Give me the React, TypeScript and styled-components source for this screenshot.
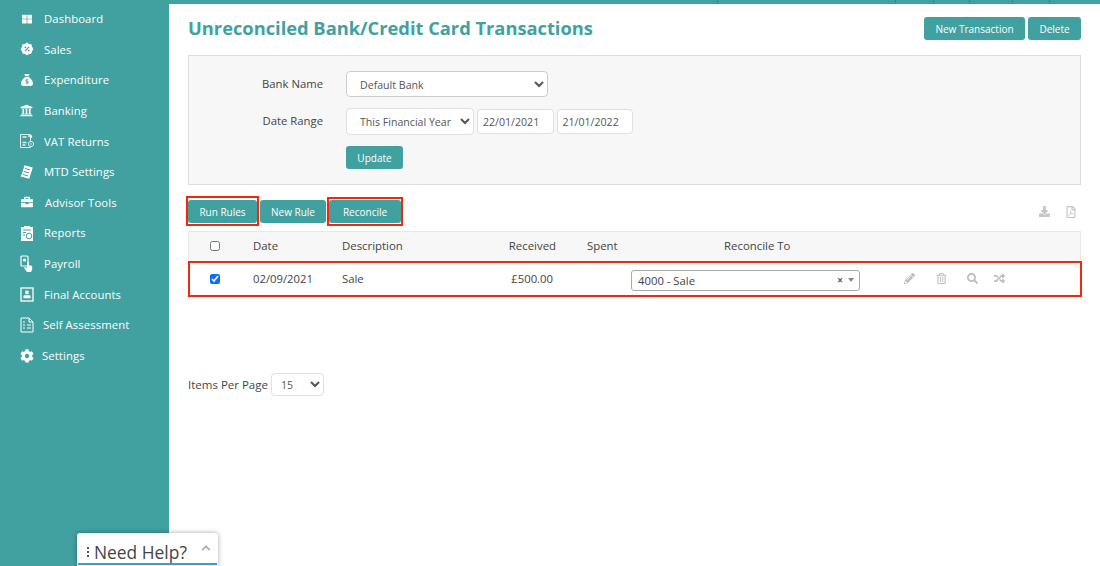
import styled, { createGlobalStyle } from "styled-components";
import {
  FaBriefcase,
  FaChevronUp,
  FaCog,
  FaDownload,
  FaPencilAlt,
  FaRandom,
  FaRegFilePdf,
  FaSearch,
  FaThLarge,
  FaUniversity,
  FaRegTrashAlt,
} from "react-icons/fa";
import { FaSackDollar } from "react-icons/fa6";
import { RiDiscountPercentFill } from "react-icons/ri";
import type { ReactNode } from "react";

const teal = "#41a1a0";
const red = "#f0280f";

const GlobalStyle = createGlobalStyle`
  html, body {
    margin: 0;
    padding: 0;
    height: 100%;
    overflow: hidden;
    background: #fff;
  }
  body {
    font-family: "Open Sans", "Liberation Sans", sans-serif;
    font-size: 11px;
    color: #444;
  }
`;

const Page = styled.div`
  display: flex;
  width: 1100px;
  height: 566px;
  position: relative;
  overflow: hidden;
`;

const Sidebar = styled.nav`
  width: 169px;
  flex: none;
  background: ${teal};
  padding-top: 3.4px;
  box-sizing: border-box;
`;

const NavItem = styled.div<{ $height?: number; $left?: number }>`
  display: flex;
  align-items: center;
  height: ${(p) => p.$height ?? 30.6}px;
  padding-left: ${(p) => p.$left ?? 44}px;
  position: relative;
  color: #fff;
  font-size: 11.3px;
  letter-spacing: 0.1px;
`;

const NavIcon = styled.span`
  position: absolute;
  left: 18px;
  width: 17px;
  height: 17px;
  display: flex;
  align-items: center;
  justify-content: center;
  color: #fff;
`;

const Main = styled.main`
  flex: 1;
  min-width: 0;
  padding: 0 19px;
  position: relative;
  box-sizing: border-box;
`;

const TopBar = styled.div`
  display: flex;
  height: 4px;
  margin: 0 -19px;
  background: ${teal};
`;

const TopCell = styled.span<{ $width: number }>`
  width: ${(p) => p.$width}px;
  flex: none;
  border-right: 1px solid #35898a;
  box-sizing: border-box;
`;

const Header = styled.div`
  display: flex;
  align-items: center;
  justify-content: space-between;
  height: 51px;
  padding-bottom: 2px;
  box-sizing: border-box;
`;

const Title = styled.h1`
  margin: 0 0 2px;
  font-size: 18.3px;
  font-weight: 700;
  color: ${teal};
  line-height: 30px;
`;

const ButtonRow = styled.div`
  display: flex;
  gap: 3px;
`;

const Button = styled.button<{ $width: number; $frameTop?: number }>`
  position: relative;
  width: ${(p) => p.$width}px;
  height: 23px;
  padding: 0;
  border: none;
  border-radius: 3px;
  background: ${teal};
  color: #fff;
  font-family: inherit;
  font-size: 10px;
  ${(p) =>
    p.$frameTop !== undefined &&
    `&::after {
      content: "";
      position: absolute;
      top: -${p.$frameTop}px;
      left: -2px;
      right: -2px;
      bottom: -3px;
      border: 2px solid ${red};
    }`}
`;

const FilterPanel = styled.section`
  height: 130px;
  box-sizing: border-box;
  background: #f7f7f7;
  border: 1px solid #ddd;
  padding-top: 15px;
`;

const FilterRow = styled.div<{ $mb: number }>`
  display: flex;
  align-items: center;
  margin-bottom: ${(p) => p.$mb}px;
`;

const FilterLabel = styled.label`
  width: 134px;
  text-align: right;
  font-size: 11.3px;
  color: #444;
  margin-right: 23px;
  padding-bottom: 2px;
`;

const Select = styled.select<{ $width: number; $height: number; $light?: boolean; $pad?: number }>`
  width: ${(p) => p.$width}px;
  height: ${(p) => p.$height}px;
  box-sizing: border-box;
  padding: 1px 0 0 ${(p) => p.$pad ?? 9}px;
  border: 1px solid ${(p) => (p.$light ? "#e0e0e0" : "#ccc")};
  border-radius: 4px;
  background: #fff;
  font-family: inherit;
  font-size: 10.6px;
  color: #555;
`;

const DateInput = styled.input`
  width: 76.5px;
  height: 25px;
  margin-left: 3px;
  box-sizing: border-box;
  padding: 0 0 0 5px;
  border: 1px solid #e0e0e0;
  border-radius: 4px;
  font-family: inherit;
  font-size: 10.6px;
  color: #555;
`;

const UpdateWrap = styled.div`
  padding-left: 157px;
`;

const Toolbar = styled.div`
  display: flex;
  align-items: center;
  justify-content: space-between;
  margin-top: 15px;
  height: 23px;
`;

const ExportIcons = styled.div`
  display: flex;
  align-items: center;
  gap: 15px;
  padding-right: 4px;
  color: #c4c4c4;
`;

const TableHead = styled.div`
  display: grid;
  grid-template-columns: 64px 89px 120px 94px 75px 229px 1fr;
  align-items: center;
  height: 30px;
  margin-top: 8px;
  padding-bottom: 2px;
  box-sizing: border-box;
  background: #f7f7f7;
  border: 1px solid #e8e8e8;
  border-bottom: none;
  font-size: 11.4px;
  font-weight: 500;
  color: #444;
`;

const TableRow = styled.div`
  display: grid;
  grid-template-columns: 63px 89px 120px 94px 75px 229px 1fr;
  align-items: center;
  height: 36px;
  width: 894px;
  padding-bottom: 1px;
  box-sizing: border-box;
  border: 2px solid ${red};
  font-size: 11.3px;
  color: #444;
`;

const Cell = styled.div<{ $align?: string; $pr?: number; $pl?: number }>`
  text-align: ${(p) => p.$align ?? "left"};
  padding-right: ${(p) => p.$pr ?? 0}px;
  padding-left: ${(p) => p.$pl ?? 0}px;
`;

const CheckCell = styled.div<{ $left: number }>`
  display: flex;
  padding-left: ${(p) => p.$left}px;
`;

const Check = styled.input`
  width: 10px;
  height: 10px;
  margin: 0;
  accent-color: #0d6efd;
`;

const Combo = styled.div`
  display: flex;
  align-items: center;
  height: 21px;
  margin-top: 3px;
  box-sizing: border-box;
  border: 1px solid #aaa;
  border-radius: 3px;
  padding: 0 5px 0 6px;
  background: #fff;
  font-size: 11.3px;
  color: #444;
`;

const ComboText = styled.span`
  flex: 1;
`;

const ComboClear = styled.span`
  font-size: 10px;
  font-weight: 700;
  color: #555;
  margin-right: 5px;
`;

const ComboCaret = styled.span`
  width: 0;
  height: 0;
  border-left: 3px solid transparent;
  border-right: 3px solid transparent;
  border-top: 4px solid #888;
`;

const RowActions = styled.div`
  display: flex;
  align-items: center;
  padding-left: 44px;
  color: #bdbdbd;
  font-size: 11px;
`;

const ActionIcon = styled.span<{ $width: number }>`
  width: ${(p) => p.$width}px;
  display: flex;
`;

const PagerRow = styled.div`
  display: flex;
  align-items: center;
  margin-top: 76px;
  font-size: 11.5px;
  color: #444;
  gap: 3px;
`;

const HelpTab = styled.div`
  position: absolute;
  left: 77px;
  top: 533px;
  width: 141px;
  height: 33px;
  box-sizing: border-box;
  background: #fff;
  border-radius: 3px 3px 0 0;
  box-shadow: 0 0 5px rgba(0, 0, 0, 0.35);
  display: flex;
  align-items: center;
  padding: 5px 7px 0 10px;
  font-size: 17.4px;
  color: #444;
  &::after {
    content: "";
    position: absolute;
    left: 1px;
    right: 1px;
    bottom: 1px;
    height: 2px;
    background: #3a9bdc;
  }
`;

const HelpDots = styled.span`
  display: flex;
  flex-direction: column;
  gap: 2px;
  margin-right: 5px;
`;

const HelpDot = styled.i`
  display: block;
  width: 2px;
  height: 2px;
  background: #555;
`;

const HelpText = styled.span`
  flex: 1;
`;

const HelpChevron = styled.span`
  display: flex;
  color: #aaa;
  font-size: 10px;
  padding-bottom: 9px;
`;

const VatIcon = () => (
  <svg width="16" height="16" viewBox="0 0 16 16" fill="none" stroke="#fff" strokeWidth="1" opacity="0.85">
    <path d="M1.5 1.5h10v13h-10z" />
    <path d="M3.5 4h4M9 3h3.5v2M3.5 9.5h4M3.5 12h3" strokeWidth="1.3" />
    <circle cx="12" cy="11" r="2.6" fill={teal} />
    <circle cx="12" cy="11" r="0.8" fill="#fff" stroke="none" />
  </svg>
);

const MtdIcon = () => (
  <svg width="15" height="16" viewBox="0 0 15 16">
    <path d="M5.5 1.2l8.3 2.2-3.6 11.4-8.7-2.2 1.5-2.8z" fill="#fff" />
    <path d="M6 4.5l5 1.4M5 7.5l5 1.4M4 10.5l5 1.4" stroke={teal} strokeWidth="1" />
  </svg>
);

const ReportsIcon = () => (
  <svg width="14" height="16" viewBox="0 0 14 16">
    <path d="M1 2h3V1h6v1h3v14H1z" fill="#fff" />
    <path d="M3 5h8M3 7.5h3M3 10h2" stroke={teal} strokeWidth="1" />
    <circle cx="9" cy="11" r="2.8" fill="none" stroke={teal} strokeWidth="1" />
  </svg>
);

const PayrollIcon = () => (
  <svg width="15" height="17" viewBox="0 0 15 17">
    <rect x="2" y="1" width="7" height="10" rx="1" fill="none" stroke="#fff" strokeWidth="1.2" />
    <circle cx="5.5" cy="5" r="1.6" fill="#fff" />
    <path d="M8 7h1.6v3l3.6 1v3l-1 3H8l-3-4 1-1 2 1z" fill="#fff" />
  </svg>
);

const FinalIcon = () => (
  <svg width="14" height="15" viewBox="0 0 14 15">
    <rect x="1" y="1" width="12" height="13" fill="none" stroke="#fff" strokeWidth="1.3" />
    <rect x="5.4" y="3.6" width="3.2" height="3.6" fill="#fff" />
    <path d="M3.5 11.2V9.2c0-.6.6-1 1.5-1h4c.9 0 1.5.4 1.5 1v2z" fill="#fff" />
  </svg>
);

const SelfIcon = () => (
  <svg width="14" height="16" viewBox="0 0 14 16" fill="none" stroke="#fff" strokeWidth="1">
    <path d="M1 1h8l4 4v10H1z" />
    <path d="M9 1v4h4M3 5h2M3 8h2M3 11h2M7 8h4M7 11h4" />
  </svg>
);

const navItems: { label: string; icon: ReactNode; height?: number; left?: number }[] = [
  { label: "Dashboard", icon: <FaThLarge size={10} /> },
  { label: "Sales", icon: <RiDiscountPercentFill size={14} /> },
  { label: "Expenditure", icon: <FaSackDollar size={12} /> },
  { label: "Banking", icon: <FaUniversity size={13} /> },
  { label: "VAT Returns", icon: <VatIcon /> },
  { label: "MTD Settings", icon: <MtdIcon /> },
  { label: "Advisor Tools", icon: <FaBriefcase size={12} />, left: 45 },
  { label: "Reports", icon: <ReportsIcon /> },
  { label: "Payroll", icon: <PayrollIcon /> },
  { label: "Final Accounts", icon: <FinalIcon /> },
  { label: "Self Assessment", icon: <SelfIcon />, left: 43 },
  { label: "Settings", icon: <FaCog size={14} />, left: 42, height: 32 },
];

const topCells = [549, 178, 38, 36, 43, 37];

export default function App() {
  return (
    <Page>
      <GlobalStyle />
      <Sidebar>
        {navItems.map((item) => (
          <NavItem key={item.label} $height={item.height} $left={item.left}>
            <NavIcon>{item.icon}</NavIcon>
            {item.label}
          </NavItem>
        ))}
      </Sidebar>
      <Main>
        <TopBar>
          {topCells.map((w, i) => (
            <TopCell key={i} $width={w} />
          ))}
        </TopBar>
        <Header>
          <Title>Unreconciled Bank/Credit Card Transactions</Title>
          <ButtonRow>
            <Button $width={101}>New Transaction</Button>
            <Button $width={53}>Delete</Button>
          </ButtonRow>
        </Header>
        <FilterPanel>
          <FilterRow $mb={11}>
            <FilterLabel>Bank Name</FilterLabel>
            <Select $width={202} $height={26} defaultValue="default">
              <option value="default">Default Bank</option>
            </Select>
          </FilterRow>
          <FilterRow $mb={11}>
            <FilterLabel>Date Range</FilterLabel>
            <Select $width={128} $height={27} $light defaultValue="year">
              <option value="year">This Financial Year</option>
            </Select>
            <DateInput defaultValue="22/01/2021" />
            <DateInput defaultValue="21/01/2022" />
          </FilterRow>
          <UpdateWrap>
            <Button $width={57}>Update</Button>
          </UpdateWrap>
        </FilterPanel>
        <Toolbar>
          <ButtonRow>
            <Button $width={69} $frameTop={4}>Run Rules</Button>
            <Button $width={66}>New Rule</Button>
            <Button $width={72} $frameTop={3}>Reconcile</Button>
          </ButtonRow>
          <ExportIcons>
            <FaDownload size={11} />
            <FaRegFilePdf size={12} />
          </ExportIcons>
        </Toolbar>
        <TableHead>
          <CheckCell $left={21}>
            <Check type="checkbox" />
          </CheckCell>
          <Cell>Date</Cell>
          <Cell>Description</Cell>
          <Cell $align="right">Received</Cell>
          <Cell $pl={31}>Spent</Cell>
          <Cell $pl={93}>Reconcile To</Cell>
        </TableHead>
        <TableRow>
          <CheckCell $left={20}>
            <Check type="checkbox" defaultChecked />
          </CheckCell>
          <Cell>02/09/2021</Cell>
          <Cell>Sale</Cell>
          <Cell $align="right" $pr={3}>£500.00</Cell>
          <Cell />
          <Combo>
            <ComboText>4000 - Sale</ComboText>
            <ComboClear>×</ComboClear>
            <ComboCaret />
          </Combo>
          <RowActions>
            <ActionIcon $width={32}><FaPencilAlt /></ActionIcon>
            <ActionIcon $width={31}><FaRegTrashAlt /></ActionIcon>
            <ActionIcon $width={27}><FaSearch /></ActionIcon>
            <ActionIcon $width={14}><FaRandom /></ActionIcon>
          </RowActions>
        </TableRow>
        <PagerRow>
          Items Per Page
          <Select $width={53} $height={23} $light $pad={5} defaultValue="15">
            <option value="15">15</option>
          </Select>
        </PagerRow>
      </Main>
      <HelpTab>
        <HelpDots>
          <HelpDot />
          <HelpDot />
          <HelpDot />
        </HelpDots>
        <HelpText>Need Help?</HelpText>
        <HelpChevron><FaChevronUp /></HelpChevron>
      </HelpTab>
    </Page>
  );
}
